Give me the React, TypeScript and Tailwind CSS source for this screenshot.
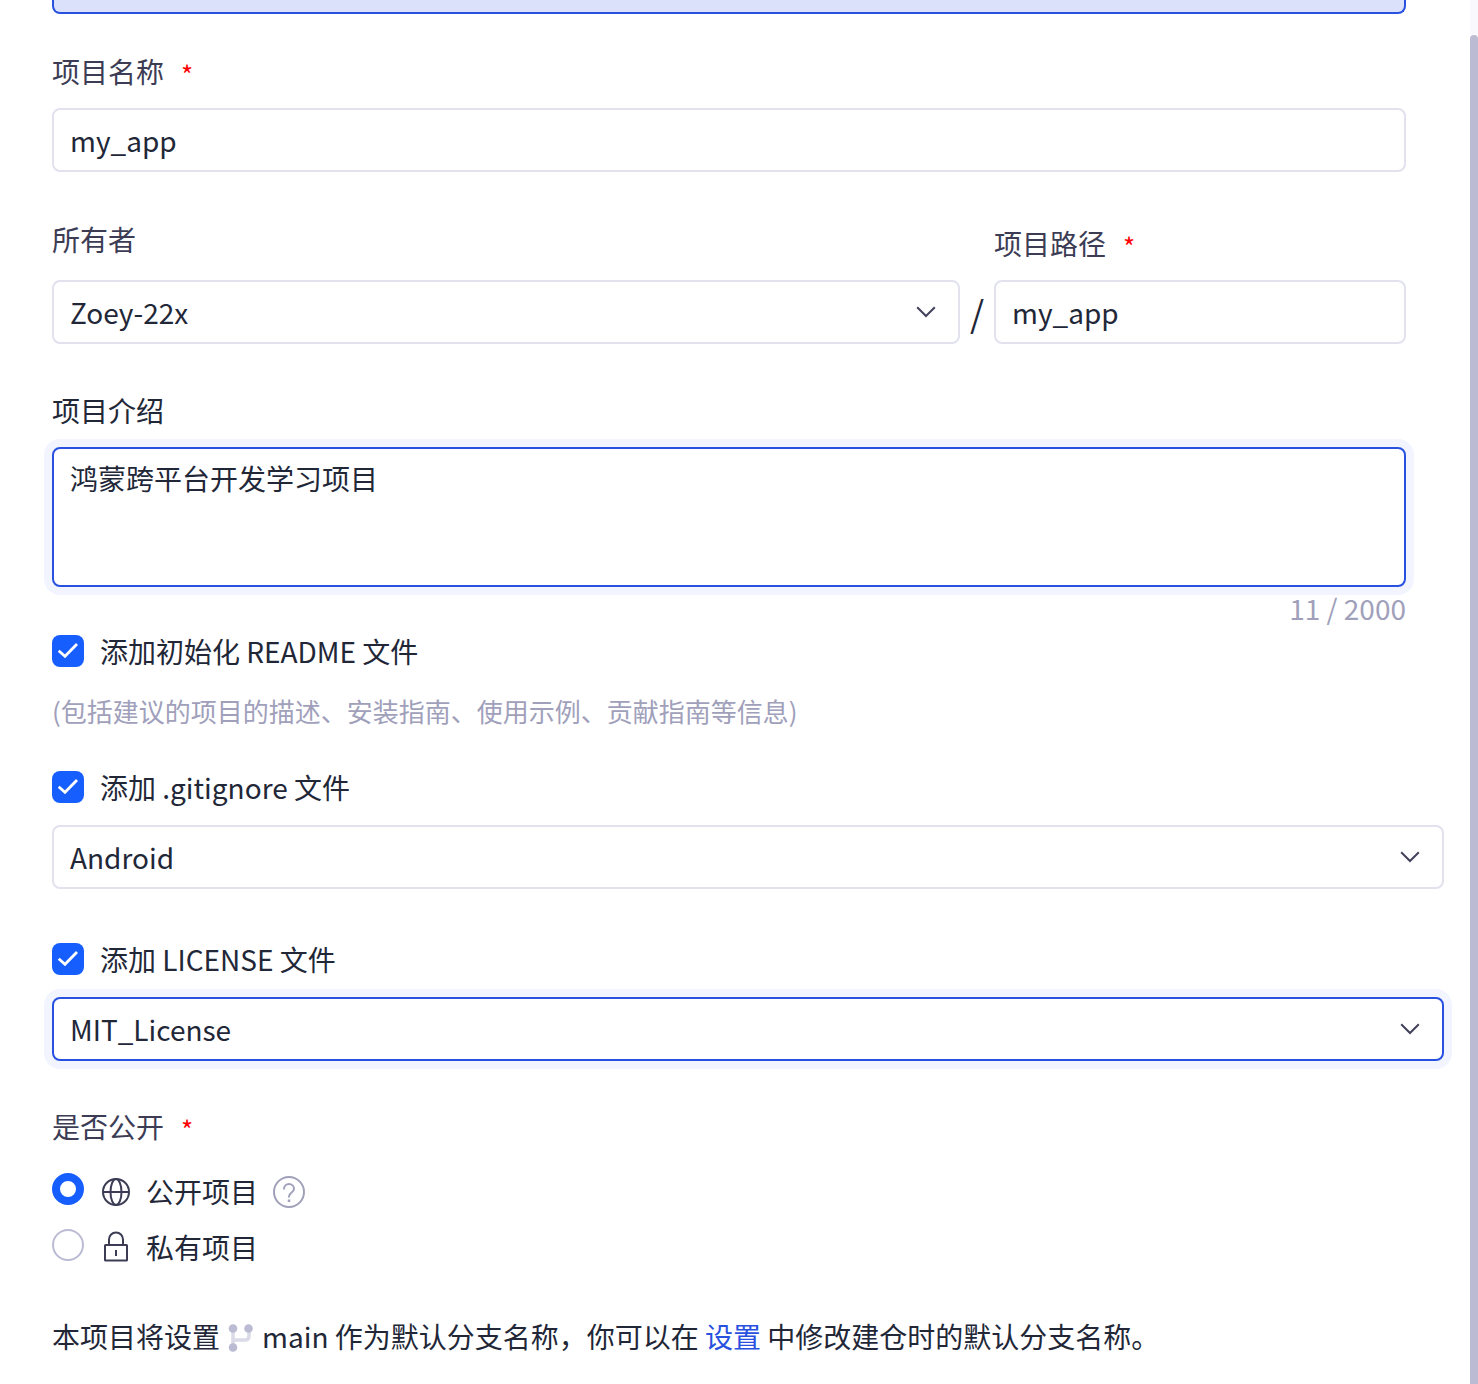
import { useState } from "react";

const inputClass =
  "block h-16 rounded-lg border-2 border-[#e2e2ef] bg-white px-4 text-[28px] text-[#222738] outline-none";

const RequiredMark = () => (
  <span className="ml-[17px] pt-[3px] text-[26px] leading-10 text-[#ff0000]">*</span>
);

const Chevron = () => (
  <svg width="20" height="12" viewBox="0 0 20 12" fill="none" className="mr-[6px] shrink-0">
    <path d="M1.200 1.200 10 10l8.800-8.800" stroke="#42425c" strokeWidth="2" />
  </svg>
);

type SelectProps = {
  value: string;
  className?: string;
  focused?: boolean;
};

const Select = ({ value, className = "", focused = false }: SelectProps) => (
  <div
    role="combobox"
    aria-expanded="false"
    className={`flex h-16 items-center justify-between rounded-lg border-2 bg-white px-4 ${
      focused ? "border-[#2851e0] shadow-[0_0_0_8px_#f2f5ff]" : "border-[#e2e2ef]"
    } ${className}`}
  >
    <span className="leading-10">{value}</span>
    <Chevron />
  </div>
);

type CheckboxProps = {
  label: string;
  checked: boolean;
  onChange: () => void;
};

const Checkbox = ({ label, checked, onChange }: CheckboxProps) => (
  <button type="button" className="flex h-8 items-center gap-4" onClick={onChange}>
    <span
      className={`flex h-8 w-8 items-center justify-center rounded-lg ${
        checked ? "bg-[#175eff]" : "border-2 border-[#bbbbd3]"
      }`}
    >
      {checked && (
        <svg width="32" height="32" viewBox="0 0 32 32" fill="none">
          <path d="m6.700 15.800 6.300 5.500 12-12.300" stroke="white" strokeWidth="2.800" />
        </svg>
      )}
    </span>
    <span className="leading-8">{label}</span>
  </button>
);

type RadioProps = {
  checked: boolean;
};

const Radio = ({ checked }: RadioProps) => (
  <span
    className={`h-8 w-8 shrink-0 rounded-full ${
      checked ? "border-8 border-[#175eff]" : "border-2 border-[#bbbbd3]"
    }`}
  />
);

const GlobeIcon = () => (
  <svg width="28" height="28" viewBox="0 0 28 28" fill="none" stroke="#3c3c55" strokeWidth="2">
    <circle cx="14" cy="14" r="13" />
    <ellipse cx="14" cy="14" rx="5.500" ry="13" />
    <path d="M1 14h26" />
  </svg>
);

const LockIcon = () => (
  <svg width="28" height="32" viewBox="0 0 28 32" fill="none" stroke="#3c3c55" strokeWidth="2">
    <rect x="3" y="14" width="22" height="15.500" rx="0.500" />
    <path d="M7 14V8.500a7 7 0 0 1 14 0V14M14 19v6" />
  </svg>
);

const HelpIcon = () => (
  <svg width="32" height="32" viewBox="0 0 32 32" fill="none" stroke="#a0a0bb" strokeWidth="2">
    <circle cx="16" cy="16" r="15" />
    <path d="M11 13.500V13a5 5 0 0 1 10 0c0 3.500-5 3.500-5 7.500v1" />
    <path d="M16 23.500v2.500" strokeWidth="2.500" />
  </svg>
);

const BranchIcon = () => (
  <svg width="26" height="28" viewBox="0 0 26 28" fill="none">
    <path d="M5 4v20M21 4v8q0 4-4 4H5" stroke="#dadae8" strokeWidth="3.500" />
    <circle cx="5" cy="4.500" r="4.300" fill="#bbbbd3" />
    <circle cx="20.500" cy="4.500" r="4.300" fill="#bbbbd3" />
    <circle cx="5" cy="23.500" r="4.300" fill="#bbbbd3" />
  </svg>
);

const App = () => {
  const [name, setName] = useState("my_app");
  const [path, setPath] = useState("my_app");
  const [description, setDescription] = useState("鸿蒙跨平台开发学习项目");
  const [readme, setReadme] = useState(true);
  const [gitignore, setGitignore] = useState(true);
  const [license, setLicense] = useState(true);
  const [isPublic, setIsPublic] = useState(true);

  return (
    <div className="flex h-[1384px] w-full justify-between overflow-hidden bg-white font-['Noto_Sans_CJK_SC',sans-serif] text-[28px] text-[#222738]">
      <form className="ml-[52px] flex w-[1392px] flex-col">
        <div className="h-[14px] w-[1354px] shrink-0 rounded-b-lg border-2 border-t-0 border-[#2851e0] bg-[#dce1fb]" />

        {/* 项目名称 */}
        <label className="mt-[37px] flex h-10 leading-10 text-[#3c3c55]">
          项目名称
          <RequiredMark />
        </label>
        <input
          className={`${inputClass} mt-[17px] w-[1354px]`}
          value={name}
          onChange={(e) => setName(e.target.value)}
        />

        {/* 所有者 / 项目路径 */}
        <div className="mt-[46px] flex w-[1354px]">
          <div className="w-[908px]">
            <label className="block h-10 pt-px leading-10 text-[#3c3c55]">所有者</label>
            <Select value="Zoey-22x" className="mt-[22px]" />
          </div>
          <span className="flex w-[34px] items-center justify-center pt-[62px] text-[36px] leading-10">
            /
          </span>
          <div className="flex-1 pt-[5px]">
            <label className="flex h-10 leading-10 text-[#3c3c55]">
              项目路径
              <RequiredMark />
            </label>
            <input
              className={`${inputClass} mt-[17px] w-full`}
              value={path}
              onChange={(e) => setPath(e.target.value)}
            />
          </div>
        </div>

        {/* 项目介绍 */}
        <label className="mt-[46px] block h-10 leading-10">项目介绍</label>
        <textarea
          className="mt-[17px] block h-[140px] w-[1354px] shrink-0 resize-none rounded-lg border-2 border-[#2851e0] bg-white px-4 py-2 leading-[42px] shadow-[0_0_0_8px_#f2f5ff] outline-none"
          value={description}
          onChange={(e) => setDescription(e.target.value)}
        />
        <div className="mt-px h-10 w-[1354px] text-right leading-10 text-[#a0a0bb]">
          {description.length} / 2000
        </div>

        <div className="mt-[7px]">
          <Checkbox
            label="添加初始化 README 文件"
            checked={readme}
            onChange={() => setReadme(!readme)}
          />
        </div>
        <p className="mt-6 h-10 text-[26px] leading-10 text-[#a0a0bb]">
          (包括建议的项目的描述、安装指南、使用示例、贡献指南等信息)
        </p>

        <div className="mt-10">
          <Checkbox
            label="添加 .gitignore 文件"
            checked={gitignore}
            onChange={() => setGitignore(!gitignore)}
          />
        </div>
        <Select value="Android" className="mt-[22px]" />

        <div className="mt-[54px]">
          <Checkbox
            label="添加 LICENSE 文件"
            checked={license}
            onChange={() => setLicense(!license)}
          />
        </div>
        <Select value="MIT_License" className="mt-[22px]" focused />

        {/* 是否公开 */}
        <label className="mt-[45px] flex h-10 leading-10 text-[#3c3c55]">
          是否公开
          <RequiredMark />
        </label>
        <div className="mt-[27px] flex flex-col gap-6">
          <button type="button" className="flex h-8" onClick={() => setIsPublic(true)}>
            <Radio checked={isPublic} />
            <span className="ml-[18px] mt-[5px]">
              <GlobeIcon />
            </span>
            <span className="ml-4 mt-[2px] leading-8">公开项目</span>
            <span className="ml-[15px] mt-[3px]">
              <HelpIcon />
            </span>
          </button>
          <button type="button" className="flex h-8" onClick={() => setIsPublic(false)}>
            <Radio checked={!isPublic} />
            <span className="ml-[18px] mt-[2px]">
              <LockIcon />
            </span>
            <span className="ml-4 mt-[2px] leading-8">私有项目</span>
          </button>
        </div>

        <div className="mt-[55px] flex h-10 items-center whitespace-pre leading-10">
          本项目将设置
          <span className="ml-2 mr-2 pt-1">
            <BranchIcon />
          </span>
          main 作为默认分支名称，你可以在 <a className="text-[#2851e0]">设置</a> 中修改建仓时的默认分支名称。
        </div>
      </form>

      {/* scrollbar */}
      <div className="w-2 bg-[#f9f9fd] pt-[35px]">
        <div className="h-[1400px] rounded-t-lg bg-[#bbbbd3]" />
      </div>
    </div>
  );
};

export default App;
